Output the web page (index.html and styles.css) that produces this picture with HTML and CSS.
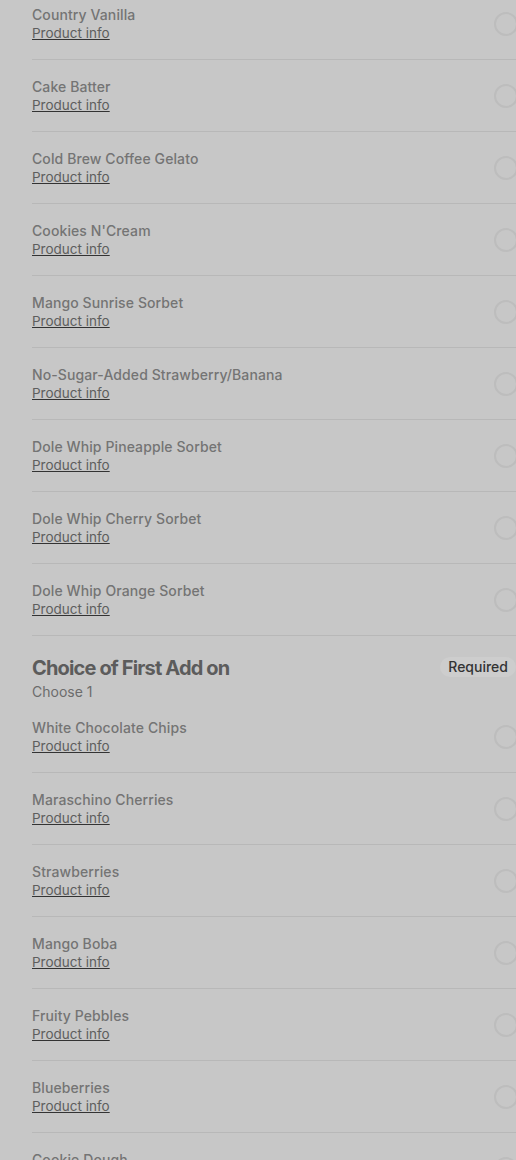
FILE: index.html
```html
<!DOCTYPE html>
<html lang="en">
<head>
    <meta charset="UTF-8">
    <meta name="viewport" content="width=device-width, initial-scale=1.0">
    <title>Choose options</title>
    <link rel="stylesheet" href="styles.css">
</head>
<body>
    <div class="sheet">
        <div class="group">
            <div class="option">
                <div class="option-text">
                    <span class="option-name">Country Vanilla</span>
                    <a class="option-info" href="#">Product info</a>
                </div>
                <span class="radio"></span>
            </div>
            <div class="option">
                <div class="option-text">
                    <span class="option-name">Cake Batter</span>
                    <a class="option-info" href="#">Product info</a>
                </div>
                <span class="radio"></span>
            </div>
            <div class="option">
                <div class="option-text">
                    <span class="option-name">Cold Brew Coffee Gelato</span>
                    <a class="option-info" href="#">Product info</a>
                </div>
                <span class="radio"></span>
            </div>
            <div class="option">
                <div class="option-text">
                    <span class="option-name">Cookies N'Cream</span>
                    <a class="option-info" href="#">Product info</a>
                </div>
                <span class="radio"></span>
            </div>
            <div class="option">
                <div class="option-text">
                    <span class="option-name">Mango Sunrise Sorbet</span>
                    <a class="option-info" href="#">Product info</a>
                </div>
                <span class="radio"></span>
            </div>
            <div class="option">
                <div class="option-text">
                    <span class="option-name">No-Sugar-Added Strawberry/Banana</span>
                    <a class="option-info" href="#">Product info</a>
                </div>
                <span class="radio"></span>
            </div>
            <div class="option">
                <div class="option-text">
                    <span class="option-name">Dole Whip Pineapple Sorbet</span>
                    <a class="option-info" href="#">Product info</a>
                </div>
                <span class="radio"></span>
            </div>
            <div class="option">
                <div class="option-text">
                    <span class="option-name">Dole Whip Cherry Sorbet</span>
                    <a class="option-info" href="#">Product info</a>
                </div>
                <span class="radio"></span>
            </div>
            <div class="option">
                <div class="option-text">
                    <span class="option-name">Dole Whip Orange Sorbet</span>
                    <a class="option-info" href="#">Product info</a>
                </div>
                <span class="radio"></span>
            </div>
        </div>

        <div class="group">
            <div class="group-head">
                <div>
                    <h2 class="group-title">Choice of First Add on</h2>
                    <p class="group-sub">Choose 1</p>
                </div>
                <span class="badge">Required</span>
            </div>
            <div class="option">
                <div class="option-text">
                    <span class="option-name">White Chocolate Chips</span>
                    <a class="option-info" href="#">Product info</a>
                </div>
                <span class="radio"></span>
            </div>
            <div class="option">
                <div class="option-text">
                    <span class="option-name">Maraschino Cherries</span>
                    <a class="option-info" href="#">Product info</a>
                </div>
                <span class="radio"></span>
            </div>
            <div class="option">
                <div class="option-text">
                    <span class="option-name">Strawberries</span>
                    <a class="option-info" href="#">Product info</a>
                </div>
                <span class="radio"></span>
            </div>
            <div class="option">
                <div class="option-text">
                    <span class="option-name">Mango Boba</span>
                    <a class="option-info" href="#">Product info</a>
                </div>
                <span class="radio"></span>
            </div>
            <div class="option">
                <div class="option-text">
                    <span class="option-name">Fruity Pebbles</span>
                    <a class="option-info" href="#">Product info</a>
                </div>
                <span class="radio"></span>
            </div>
            <div class="option">
                <div class="option-text">
                    <span class="option-name">Blueberries</span>
                    <a class="option-info" href="#">Product info</a>
                </div>
                <span class="radio"></span>
            </div>
            <div class="option">
                <div class="option-text">
                    <span class="option-name">Cookie Dough</span>
                    <a class="option-info" href="#">Product info</a>
                </div>
                <span class="radio"></span>
            </div>
        </div>
    </div>
</body>
</html>
```

FILE: styles.css
```css
html, body {
    margin: 0;
    background-color: #c7c7c7;
    overflow: hidden;
}

body {
    font-family: Inter, "Noto Sans", Arial, sans-serif;
    color: #6f6f6f;
}

/* scrolled part of the options sheet */
.sheet {
    width: 488px;
    margin: -12px 0 0 32px;
}

.option {
    display: flex;
    align-items: center;
    justify-content: space-between;
    padding: 18px 0 17px;
    border-bottom: 1px solid #b8b8b8;
}

.option-text {
    display: flex;
    flex-direction: column;
}

.option-name {
    font-size: 14px;
    line-height: 18px;
    font-weight: 500;
    letter-spacing: 0.1px;
    color: #747474;
}

.option-info {
    font-size: 13.5px;
    line-height: 18px;
    color: #5e5e5e;
    text-decoration: underline;
    text-decoration-color: #333;
    align-self: flex-start;
}

.radio {
    width: 20px;
    height: 20px;
    border: 2px solid #bdbdbd;
    border-radius: 50%;
    margin-right: 2px;
}

.group-head {
    display: flex;
    justify-content: space-between;
    align-items: flex-start;
    padding-top: 20px;
}

.group-title {
    margin: 0;
    font-size: 20px;
    line-height: 24px;
    font-weight: 700;
    letter-spacing: -0.85px;
    color: #5c5c5c;
}

.group-sub {
    margin: 3px 0 0;
    font-size: 14px;
    line-height: 18px;
    color: #6c6c6c;
}

.badge {
    margin-top: 1px;
    margin-right: 4px;
    padding: 1px 8px;
    font-size: 14px;
    line-height: 18px;
    font-weight: 500;
    color: #333;
    background-color: #cdcdcd;
    border-radius: 10px;
}
```
